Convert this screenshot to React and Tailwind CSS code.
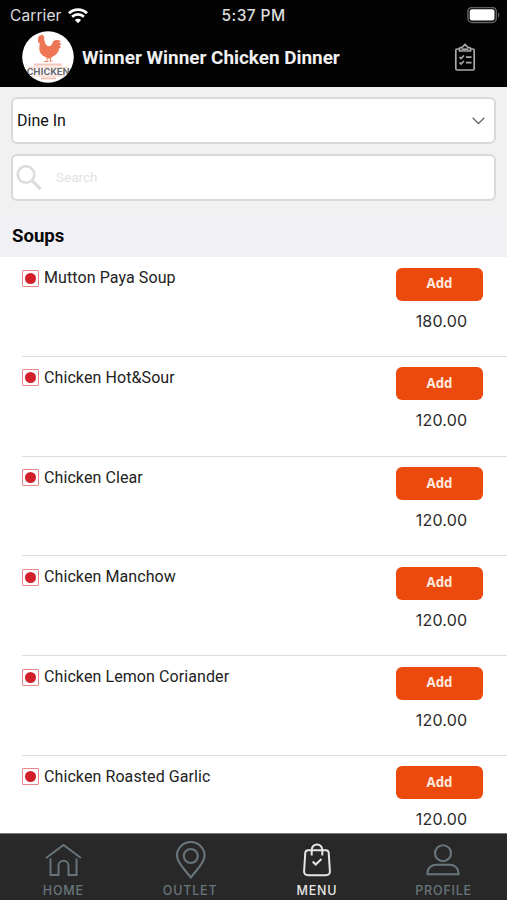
import React, { useState } from "react";

const ITEMS = [
  { name: "Mutton Paya Soup", price: "180.00" },
  { name: "Chicken Hot&Sour", price: "120.00" },
  { name: "Chicken Clear", price: "120.00" },
  { name: "Chicken Manchow", price: "120.00" },
  { name: "Chicken Lemon Coriander", price: "120.00" },
  { name: "Chicken Roasted Garlic", price: "120.00" },
];

function WifiIcon() {
  return (
    <svg width="20" height="16" viewBox="0 0 20 16" fill="none" stroke="#fff">
      <path d="M1 5.2a13 13 0 0 1 18 0" strokeWidth="2.9" />
      <path d="M4.1 8.8a8.4 8.4 0 0 1 11.8 0" strokeWidth="2.6" />
      <path d="M10 15.3 6.9 12.1a4.4 4.4 0 0 1 6.2 0Z" fill="#fff" stroke="none" />
    </svg>
  );
}

function BatteryIcon() {
  return (
    <svg width="33" height="17" viewBox="0 0 33 17" fill="none">
      <rect x="0.9" y="0.4" width="28.4" height="15" rx="4.2" stroke="#606060" strokeWidth="1.5" />
      <rect x="2.7" y="2.2" width="24.8" height="11.4" rx="2.4" fill="#fff" />
      <path d="M31 5.500v5c1.9-.6 1.9-4.4 0-5Z" fill="#606060" />
    </svg>
  );
}

function Logo() {
  return (
    <svg width="52" height="52" viewBox="0 0 52 52">
      <defs>
        <clipPath id="logo-clip">
          <circle cx="26" cy="26" r="25.8" />
        </clipPath>
      </defs>
      <circle cx="26" cy="26" r="25.8" fill="#fff" />
      <g clipPath="url(#logo-clip)">
        <path
          d="M16 9c0-3 1-5 2.500-4.500 1-1.500 2.500-1 2.500.5 1.500 0 2 2 1 3l1.500 5c2 3 5 3 6.500 0 1-4 4-5 9-3l-2 1.500 2.500 1.500-2 1.500 1.500 2-2 1c0 4-3 6-6 8l-3 2-2.500 0-3-2c-4-2-6-6-5-10l0-4-1.500 0Z"
          fill="#ee7556"
        />
        <path d="M25 26v4M28.500 26v4M22 30.500h4M26.500 30h4" stroke="#ee8a70" strokeWidth="1" />
        <path d="M12 33.700h28" stroke="#f7c9be" strokeWidth="2.200" />
        <path d="M6 36.200h40M9 45h34" stroke="#f7c5b9" strokeWidth="0.900" />
        <text
          x="26.200"
          y="44"
          textAnchor="middle"
          textLength="43"
          lengthAdjust="spacingAndGlyphs"
          fontSize="8.500"
          fontWeight="700"
          fill="#6b6b6e"
          fontFamily="Roboto, sans-serif"
        >
          CHICKEN
        </text>
        <path d="M19 47.300h15" stroke="#f5bcae" strokeWidth="1.800" />
      </g>
    </svg>
  );
}

function OrdersIcon() {
  return (
    <svg width="22" height="30" viewBox="0 0 22 30" fill="none" stroke="#a9a9a9" strokeWidth="1.7">
      <path d="M5.200 7H3.200A1.400 1.400 0 0 0 1.800 8.400v18.200c0 .8.600 1.400 1.400 1.400h15.600c.8 0 1.400-.6 1.400-1.400V8.400c0-.8-.6-1.400-1.400-1.400h-2" />
      <path d="M5.500 9V6.200L8.500 5 11 2.500 13.500 5l3 1.200V9Z" />
      <path d="M7.500 7.200h7" />
      <path d="m5.500 15 1.500 1.500 3-3M12 15.200h5.500M5.500 20.500 7 22l3-3M12 20.700h5.500" />
    </svg>
  );
}

function HomeIcon() {
  return (
    <svg width="38" height="38" viewBox="0 0 38 38" fill="none" stroke="currentColor" strokeWidth="1.900">
      <path d="M2 17 19.500 4 37 17" />
      <path d="M6.500 17.500V34h8V24.700a5 5 0 0 1 10 0V34h8V17.500" />
    </svg>
  );
}

function OutletIcon() {
  return (
    <svg width="38" height="38" viewBox="0 0 38 38" fill="none" stroke="currentColor" strokeWidth="2.100">
      <path d="M19.800 36.500C15 29.500 6 22.500 6 14.500a13.800 13.500 0 0 1 27.600 0C33.600 22.500 24.600 29.500 19.800 36.500Z" />
      <circle cx="19.800" cy="15" r="7" />
    </svg>
  );
}

function MenuIcon() {
  return (
    <svg width="38" height="38" viewBox="0 0 38 38" fill="none" stroke="currentColor" strokeWidth="2">
      <path d="M10 9.200h18c1.800 0 2.500 1 2.700 2.500l1.200 18.300c.2 2.800-1.300 4.200-4 4.200H10.100c-2.700 0-4.200-1.400-4-4.200l1.200-18.300C7.500 10.200 8.200 9.200 10 9.200Z" />
      <path d="M13.700 14.500V8.800a5.300 5.300 0 0 1 10.600 0v5.700" />
      <path d="m14.700 20.500 3 3 5.800-5.500" />
    </svg>
  );
}

function ProfileIcon() {
  return (
    <svg width="38" height="38" viewBox="0 0 38 38" fill="none" stroke="currentColor" strokeWidth="2.100">
      <circle cx="18" cy="12.200" r="8" />
      <path d="M2.500 33.200v-1.200c0-5 4-8.200 9-8.200h13c5 0 9 3.200 9 8.200v1.200Z" />
    </svg>
  );
}

const TABS = [
  { id: "home", label: "HOME", Icon: HomeIcon },
  { id: "outlet", label: "OUTLET", Icon: OutletIcon },
  { id: "menu", label: "MENU", Icon: MenuIcon },
  { id: "profile", label: "PROFILE", Icon: ProfileIcon },
];

function MenuItem({ item }) {
  return (
    <li className="ml-[22px] flex h-[99.75px] shrink-0 items-start justify-between border-b-[1.5px] border-[#dedee0] pr-6">
      <div className="flex items-center pt-[9px]">
        <span className="flex size-[17px] items-center justify-center rounded-[1px] border border-[#e8868a]">
          <span className="size-[11px] rounded-full bg-[#d2202b]" />
        </span>
        <span className="ml-[5px] text-[16px] leading-6 tracking-[0.09px] text-[#222]">{item.name}</span>
      </div>
      <div className="flex w-[87px] flex-col pt-[10.5px]">
        <button className="h-[33px] rounded-[6px] bg-[#ec4a0c] font-['Open_Sans',sans-serif] text-[13.3px] font-bold text-[#fde9df]">
          Add
        </button>
        <span className="mt-[8px] pl-1 text-center font-[Inter,sans-serif] text-[16px] leading-6 tracking-[0.2px] text-[#2b2b2b]">
          {item.price}
        </span>
      </div>
    </li>
  );
}

export default function App() {
  const [tab, setTab] = useState("menu");

  return (
    <div className="flex h-[900px] w-[507px] flex-col overflow-hidden bg-white font-[Roboto,sans-serif]">
      {/* Status bar and restaurant header */}
      <header className="h-[87px] shrink-0 bg-[#030303]">
        <div className="grid h-[31px] grid-cols-3 items-center font-[Inter,sans-serif] text-[15.5px] text-[#dedede]">
          <div className="flex items-center gap-[6px] pl-[10px]">
            <span className="tracking-[0.1px]">Carrier</span>
            <WifiIcon />
          </div>
          <span className="text-center font-medium tracking-[0.4px]">5:37 PM</span>
          <div className="flex justify-end pr-[7px]">
            <BatteryIcon />
          </div>
        </div>
        <div className="flex items-center pr-[31px] pl-[22px]">
          <Logo />
          <h1 className="ml-2 flex-1 pt-[2px] text-[18.9px] font-bold text-[#f0f0f0]">Winner Winner Chicken Dinner</h1>
          <OrdersIcon />
        </div>
      </header>

      {/* Order type and search */}
      <div className="flex h-[127px] shrink-0 flex-col gap-[10px] bg-[#f1f1f1] px-[11px] pt-[10px]">
        <button className="flex h-[47px] items-center justify-between rounded-[6px] border-2 border-[#d9d9d9] bg-white pr-[9px] pl-1 text-[16px] text-[#111]">
          <span className="pt-px">Dine In</span>
          <svg width="13" height="9" viewBox="0 0 13 9" fill="none" stroke="#666" strokeWidth="1.3">
            <path d="m.7 1.700 5.800 5.800 5.800-5.800" />
          </svg>
        </button>
        <label className="flex h-[47px] items-center rounded-[6px] border-2 border-[#d9d9d9] bg-white pl-[3px]">
          <svg width="26" height="26" viewBox="0 0 26 26" fill="none" stroke="#dcdcdc">
            <circle cx="10" cy="9.500" r="8.300" strokeWidth="2.600" />
            <path d="m16 15.500 8.500 8.500" strokeWidth="3.200" />
          </svg>
          <input
            className="ml-[14px] flex-1 text-[13.5px] outline-none placeholder:text-[#e2e2e2]"
            placeholder="Search"
          />
        </label>
      </div>

      <h2 className="flex h-[43px] shrink-0 items-center bg-[#f0f0f5] pt-[2px] pl-3 text-[18.6px] font-bold text-[#080808]">
        Soups
      </h2>

      <ul className="flex min-h-0 flex-1 flex-col overflow-hidden">
        {ITEMS.map((item) => (
          <MenuItem key={item.name} item={item} />
        ))}
      </ul>

      {/* Bottom tabs */}
      <nav className="grid h-[67px] shrink-0 grid-cols-4 border-t-[1.5px] border-[#777] bg-[#282828]">
        {TABS.map(({ id, label, Icon }) => (
          <button
            key={id}
            onClick={() => setTab(id)}
            className={`flex flex-col items-center pt-[7px] ${tab === id ? "text-[#e5e5e5]" : "text-[#68757c]"}`}
          >
            <Icon />
            <span className="mt-[2px] font-[Inter,sans-serif] text-[12.5px] leading-5 font-medium tracking-[0.8px]">
              {label}
            </span>
          </button>
        ))}
      </nav>
    </div>
  );
}
